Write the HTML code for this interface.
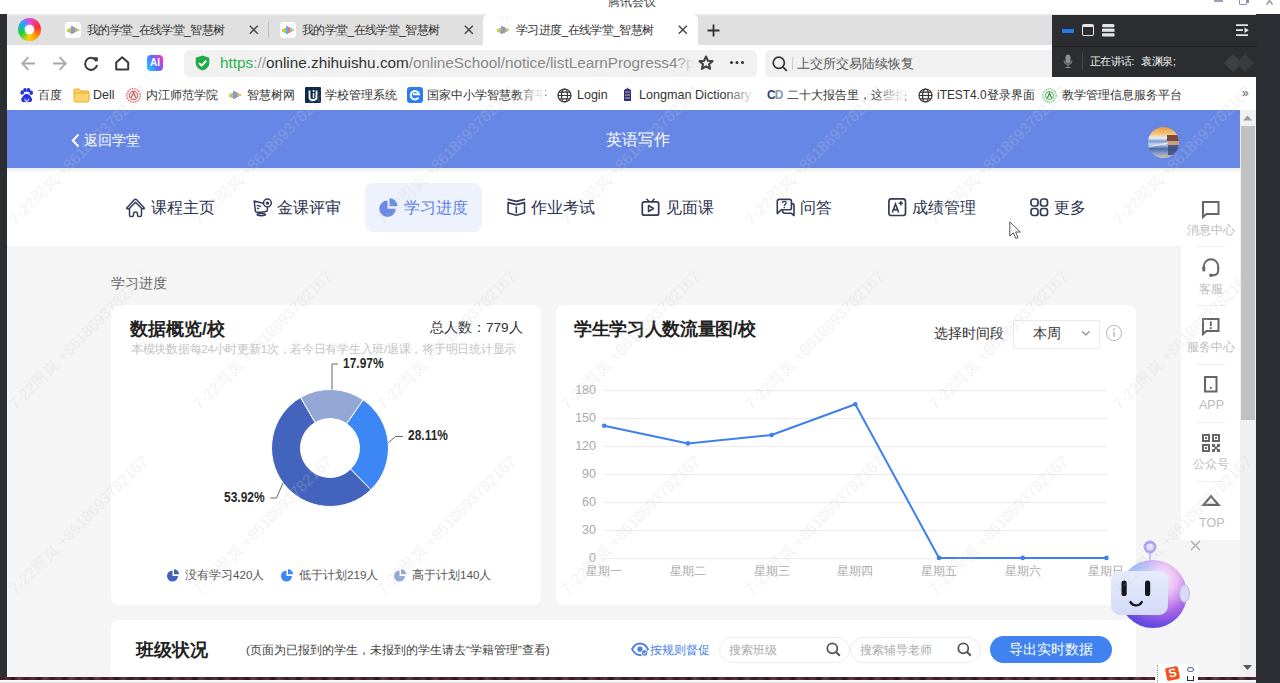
<!DOCTYPE html>
<html><head><meta charset="utf-8">
<style>
*{box-sizing:border-box;margin:0;padding:0}
html,body{width:1280px;height:683px;overflow:hidden;background:#fff;font-family:"Liberation Sans",sans-serif;color:#333}
.a{position:absolute;white-space:nowrap}
svg{position:absolute;overflow:visible}
</style></head><body>
<div class="a" style="left:0;top:0;width:1280px;height:683px;overflow:hidden">

<!-- title strip -->
<div class="a" style="left:0;top:0;width:1280px;height:14px;background:#fff"></div>
<div class="a" style="left:608px;top:-5px;font-size:12px;color:#4a4a4a;line-height:14px">腾讯会议</div>

<!-- left dark strip -->
<div class="a" style="left:0;top:14px;width:7px;height:669px;background:#2b2e32"></div>
<!-- right dark strip -->
<div class="a" style="left:1256px;top:14px;width:24px;height:669px;background:#2b2e32"></div>

<!-- tab bar -->
<div class="a" style="left:7px;top:14px;width:1249px;height:31px;background:#e0e0e0;border-top:2px solid #e8e8e8"></div>
<div class="a" style="left:483px;top:14px;width:215px;height:31px;background:#fff;border-radius:6px 6px 0 0"></div>

<!-- address row -->
<div class="a" style="left:7px;top:45px;width:1249px;height:65px;background:#fff"></div>
<div class="a" style="left:184px;top:50px;width:573px;height:27px;background:#f1f1f1;border-radius:6px"></div>
<div class="a" style="left:765px;top:50px;width:300px;height:27px;background:#f1f1f1;border-radius:6px"></div>


<!-- window controls -->
<div class="a" style="left:1214px;top:0;width:9px;height:2px;background:#9aa3b3"></div>
<div class="a" style="left:1239px;top:-4px;width:8px;height:9px;border:1.5px solid #8a94a6;border-radius:1px"></div>
<div class="a" style="left:1247px;top:-2px;width:2px;height:5px;background:#8a94a6"></div>
<svg style="left:1266px;top:-3px" width="8" height="8"><path d="M0.5 7.5L3.5 3.5L6.5 7.5M3.5 3.5L3.5 0" stroke="#8a94a6" stroke-width="1.4" fill="none"/></svg>

<!-- browser logo -->
<div class="a" style="left:18px;top:18px;width:23px;height:23px;border-radius:50%;background:conic-gradient(from 0deg,#e040e0 0deg,#ff2424 75deg,#ff9a00 140deg,#ffd000 185deg,#10d030 245deg,#14a4ff 310deg,#e040e0 360deg);opacity:0.95"></div>
<div class="a" style="left:25px;top:25px;width:9px;height:9px;border-radius:50%;background:#fff;box-shadow:0 0 2px #fff"></div>
<!-- tab favicons -->
<div class="a" style="left:65px;top:22px;width:16px;height:16px;background:#fff;border-radius:4px"></div>
<svg style="left:66px;top:25px" width="14" height="10"><g stroke-width="1.6"><path d="M2 4v3" stroke="#f5a623"/><path d="M4 3v5" stroke="#7ed321"/><path d="M6 1v8" stroke="#4a90e2"/><path d="M8 2v6" stroke="#e94b6b"/><path d="M10 3v4" stroke="#50c8a8"/><path d="M12 4v2" stroke="#f5a623"/></g></svg>
<div class="a" style="left:87px;top:23px;font-size:12px;line-height:14px;color:#333;letter-spacing:-0.6px">我的学堂_在线学堂_智慧树</div>
<svg style="left:249px;top:25px" width="10" height="10"><path d="M0.8 0.8L8.8 8.8M8.8 0.8L0.8 8.8" stroke="#444" stroke-width="1.4"/></svg>
<div class="a" style="left:268px;top:22px;width:1px;height:16px;background:#bdbdbd"></div>
<div class="a" style="left:280px;top:22px;width:16px;height:16px;background:#fff;border-radius:4px"></div>
<svg style="left:281px;top:25px" width="14" height="10"><g stroke-width="1.6"><path d="M2 4v3" stroke="#f5a623"/><path d="M4 3v5" stroke="#7ed321"/><path d="M6 1v8" stroke="#4a90e2"/><path d="M8 2v6" stroke="#e94b6b"/><path d="M10 3v4" stroke="#50c8a8"/><path d="M12 4v2" stroke="#f5a623"/></g></svg>
<div class="a" style="left:302px;top:23px;font-size:12px;line-height:14px;color:#333;letter-spacing:-0.6px">我的学堂_在线学堂_智慧树</div>
<svg style="left:464px;top:25px" width="10" height="10"><path d="M0.8 0.8L8.8 8.8M8.8 0.8L0.8 8.8" stroke="#444" stroke-width="1.4"/></svg>
<svg style="left:496px;top:25px" width="14" height="10"><g stroke-width="1.6"><path d="M2 4v3" stroke="#f5a623"/><path d="M4 3v5" stroke="#7ed321"/><path d="M6 1v8" stroke="#4a90e2"/><path d="M8 2v6" stroke="#e94b6b"/><path d="M10 3v4" stroke="#50c8a8"/><path d="M12 4v2" stroke="#f5a623"/></g></svg>
<div class="a" style="left:516px;top:23px;font-size:12px;line-height:14px;color:#333;letter-spacing:-0.6px">学习进度_在线学堂_智慧树</div>
<svg style="left:678px;top:25px" width="10" height="10"><path d="M0.8 0.8L8.8 8.8M8.8 0.8L0.8 8.8" stroke="#444" stroke-width="1.4"/></svg>
<svg style="left:707px;top:24px" width="13" height="13"><path d="M6.5 0.5v12M0.5 6.5h12" stroke="#333" stroke-width="1.8"/></svg>

<!-- nav buttons -->
<svg style="left:21px;top:56px" width="15" height="15"><path d="M14 7.5H1.5M7.5 1.2L1.2 7.5L7.5 13.8" stroke="#a8a8a8" stroke-width="1.8" fill="none"/></svg>
<svg style="left:52px;top:56px" width="15" height="15"><path d="M1 7.5H13.5M7.5 1.2L13.8 7.5L7.5 13.8" stroke="#a8a8a8" stroke-width="1.8" fill="none"/></svg>
<svg style="left:84px;top:56px" width="15" height="15"><path d="M12.5 5.2A6 6 0 1 0 13 9" stroke="#3a3a3a" stroke-width="2" fill="none"/><path d="M9.2 1.2L13.8 1.2L13.8 5.8Z" fill="#3a3a3a"/></svg>
<svg style="left:115px;top:56px" width="15" height="15"><path d="M1.2 6.5L7.2 1.2L13.2 6.5V13.5H1.2Z" stroke="#3a3a3a" stroke-width="2" fill="none" stroke-linejoin="round"/></svg>
<div class="a" style="left:147px;top:55px;width:16px;height:16px;border-radius:4px;background:linear-gradient(60deg,#1fc3ff 10%,#5a6cff 50%,#ff2fb8 95%)"></div>
<div class="a" style="left:149px;top:56px;width:12px;font-size:10px;line-height:14px;color:#fff;font-weight:bold;text-align:center">AI</div>

<!-- shield -->
<svg style="left:195px;top:55px" width="15" height="16"><path d="M7.5 0.5L14.3 2.8V8C14.3 11.8 11 14.4 7.5 15.5C4 14.4 0.7 11.8 0.7 8V2.8Z" fill="#21ab48"/><path d="M4 8L6.6 10.6L11.2 5.8" stroke="#fff" stroke-width="2" fill="none"/></svg>
<div class="a" style="left:220px;top:54px;font-size:15.3px;line-height:18px;color:#333"><span style="color:#2bb24c">https</span><span style="color:#999">://</span>online.zhihuishu.com<span style="color:#888">/onlineSchool/notice/listLearnProgress4?p</span></div>
<div class="a" style="left:676px;top:50px;width:18px;height:27px;background:linear-gradient(90deg,rgba(241,241,241,0),#f1f1f1)"></div>
<div class="a" style="left:694px;top:50px;width:63px;height:27px;background:#f1f1f1;border-radius:0 6px 6px 0"></div>
<svg style="left:698px;top:55px" width="16" height="16"><path d="M8 1.5L9.9 5.7L14.5 6.1L11 9.2L12.1 13.8L8 11.4L3.9 13.8L5 9.2L1.5 6.1L6.1 5.7Z" stroke="#444" stroke-width="2.1" fill="none" stroke-linejoin="round"/></svg>
<div class="a" style="left:730px;top:61px;width:3px;height:3px;border-radius:50%;background:#333;box-shadow:5.5px 0 #333,11px 0 #333"></div>

<!-- search -->
<svg style="left:772px;top:56px" width="16" height="16"><circle cx="6.8" cy="6.8" r="5.6" stroke="#333" stroke-width="1.7" fill="none"/><path d="M10.8 10.8L14.8 14.8" stroke="#333" stroke-width="1.8"/></svg>
<div class="a" style="left:792px;top:57px;width:1px;height:13px;background:#ccc"></div>
<div class="a" style="left:797px;top:55px;font-size:13px;line-height:17px;color:#555">上交所交易陆续恢复</div>


<!-- bookmarks -->
<svg style="left:19px;top:88px" width="15" height="15"><g fill="#2932e1"><ellipse cx="3.2" cy="4.5" rx="1.8" ry="2.3"/><ellipse cx="6" cy="2.2" rx="1.8" ry="2.1"/><ellipse cx="9.5" cy="2.2" rx="1.8" ry="2.1"/><ellipse cx="12.2" cy="4.8" rx="1.8" ry="2.3"/><path d="M7.7 5.8C5.5 5.8 2.2 9.8 2.2 11.8C2.2 13.6 3.8 14.4 5 14.2C6.2 14 7 13.6 7.7 13.6C8.4 13.6 9.2 14 10.4 14.2C11.6 14.4 13.2 13.6 13.2 11.8C13.2 9.8 9.9 5.8 7.7 5.8Z"/></g><path d="M6 10.5v2.2h3.4v-2.2" stroke="#fff" stroke-width="0.8" fill="none"/></svg>
<div class="a" style="left:38px;top:88px;font-size:12px;line-height:14px;color:#333">百度</div>
<svg style="left:73px;top:88px" width="17" height="15"><path d="M1 2.2C1 1.5 1.5 1 2.2 1H6.2L7.8 3H14.8C15.5 3 16 3.5 16 4.2V12.8C16 13.5 15.5 14 14.8 14H2.2C1.5 14 1 13.5 1 12.8Z" fill="#fcd66a" stroke="#f0a830" stroke-width="1"/><path d="M1 5H16" stroke="#f0a830" stroke-width="1"/></svg>
<div class="a" style="left:93px;top:88px;font-size:12.5px;line-height:14px;color:#333">Dell</div>
<svg style="left:126px;top:88px" width="15" height="15"><circle cx="7.5" cy="7.5" r="6.8" fill="#fbeeee" stroke="#d55a5a" stroke-width="1.2" stroke-dasharray="1.5 1"/><circle cx="7.5" cy="7.5" r="4.2" fill="none" stroke="#d04848" stroke-width="1"/><path d="M5 10L7.5 4.5L10 10" stroke="#d04848" stroke-width="1.2" fill="none"/></svg>
<div class="a" style="left:146px;top:88px;font-size:12px;line-height:14px;color:#333">内江师范学院</div>
<svg style="left:228px;top:90px" width="14" height="10"><g stroke-width="1.6"><path d="M2 4v3" stroke="#f5a623"/><path d="M4 3v5" stroke="#7ed321"/><path d="M6 1v8" stroke="#4a90e2"/><path d="M8 2v6" stroke="#e94b6b"/><path d="M10 3v4" stroke="#50c8a8"/><path d="M12 4v2" stroke="#f5a623"/></g></svg>
<div class="a" style="left:247px;top:88px;font-size:12px;line-height:14px;color:#333">智慧树网</div>
<div class="a" style="left:305px;top:87px;width:16px;height:16px;background:#0e2a4a;border-radius:1px"></div>
<svg style="left:305px;top:87px" width="16" height="16"><path d="M4.5 3.5V10.5C4.5 12 6 13 8 13C10 13 11.5 12 11.5 10.5V3.5" stroke="#fff" stroke-width="1.8" fill="none"/><circle cx="8.5" cy="4" r="1" fill="#fff"/><path d="M8.5 6V11" stroke="#fff" stroke-width="1.4"/></svg>
<div class="a" style="left:325px;top:88px;font-size:12px;line-height:14px;color:#333">学校管理系统</div>
<div class="a" style="left:407px;top:87px;width:16px;height:16px;background:#2a7cf0;border-radius:3px"></div>
<svg style="left:407px;top:87px" width="16" height="16"><path d="M11.5 10.5A4.2 4.2 0 1 1 12 7.2H6" stroke="#fff" stroke-width="2" fill="none"/></svg>
<div class="a" style="left:427px;top:88px;font-size:12px;line-height:14px;color:#333">国家中小学智慧教育平</div>
<div class="a" style="left:515px;top:86px;width:30px;height:18px;background:linear-gradient(90deg,rgba(255,255,255,0),#fff)"></div>
<svg style="left:557px;top:88px" width="15" height="15"><g stroke="#333" stroke-width="1.2" fill="none"><circle cx="7.5" cy="7.5" r="6.5"/><ellipse cx="7.5" cy="7.5" rx="3" ry="6.5"/><path d="M1 7.5H14M2 4.2H13M2 10.8H13"/></g></svg>
<div class="a" style="left:577px;top:88px;font-size:12.5px;line-height:14px;color:#333">Login</div>
<svg style="left:621px;top:87px" width="13" height="16"><path d="M3 3L6.5 1L10 3V14H3Z" fill="#2d2f8f"/><path d="M4 5H9M4 8H9M4 11H9" stroke="#f2c94c" stroke-width="0.9"/><path d="M5 1.5L6.5 0.5L8 1.5" stroke="#f2c94c" stroke-width="1" fill="none"/></svg>
<div class="a" style="left:639px;top:88px;font-size:12.6px;line-height:14px;color:#333">Longman Dictionary</div>
<div class="a" style="left:725px;top:86px;width:30px;height:18px;background:linear-gradient(90deg,rgba(255,255,255,0),#fff)"></div>
<div class="a" style="left:767px;top:87px;font-size:12px;line-height:16px;font-weight:bold;color:#2f3f73;letter-spacing:-1px">C<span style="color:#8b97b8">D</span></div>
<div class="a" style="left:787px;top:88px;font-size:12px;line-height:14px;color:#333">二十大报告里，这些提</div>
<div class="a" style="left:875px;top:86px;width:30px;height:18px;background:linear-gradient(90deg,rgba(255,255,255,0),#fff)"></div>
<svg style="left:918px;top:88px" width="15" height="15"><g stroke="#333" stroke-width="1.2" fill="none"><circle cx="7.5" cy="7.5" r="6.5"/><ellipse cx="7.5" cy="7.5" rx="3" ry="6.5"/><path d="M1 7.5H14M2 4.2H13M2 10.8H13"/></g></svg>
<div class="a" style="left:937px;top:88px;font-size:11.9px;line-height:14px;color:#333">iTEST4.0登录界面</div>
<svg style="left:1042px;top:88px" width="15" height="15"><circle cx="7.5" cy="7.5" r="6.8" fill="#e8f5ea" stroke="#7cc38a" stroke-width="1.2" stroke-dasharray="1.2 0.8"/><circle cx="7.5" cy="7.5" r="4" fill="#fff" stroke="#4caf50" stroke-width="1"/><path d="M5.5 10L7.5 5L9.5 10" stroke="#2e8b3e" stroke-width="1.2" fill="none"/></svg>
<div class="a" style="left:1062px;top:88px;font-size:12px;line-height:14px;color:#333">教学管理信息服务平台</div>
<div class="a" style="left:1242px;top:86px;font-size:12px;line-height:14px;color:#555">»</div>

<!-- blue header -->
<div class="a" style="left:7px;top:110px;width:1233px;height:58px;background:#6787e6"></div>
<svg style="left:71px;top:133px" width="9" height="15"><path d="M7.5 1.5L1.8 7.5L7.5 13.5" stroke="#fff" stroke-width="2" fill="none"/></svg>
<div class="a" style="left:84px;top:131px;font-size:14px;line-height:18px;color:#fff">返回学堂</div>
<div class="a" style="left:606px;top:130px;font-size:16px;line-height:20px;color:#fff">英语写作</div>
<svg style="left:1148px;top:127px" width="31" height="31"><defs><clipPath id="av"><circle cx="15.5" cy="15.5" r="15.5"/></clipPath><linearGradient id="avg" x1="0" y1="0" x2="0" y2="1"><stop offset="0" stop-color="#e89a45"/><stop offset="0.22" stop-color="#f5c27a"/><stop offset="0.36" stop-color="#e8eef6"/><stop offset="0.46" stop-color="#7d9cd0"/><stop offset="0.56" stop-color="#c9d6ea"/><stop offset="0.7" stop-color="#4a6aa8"/><stop offset="0.85" stop-color="#8aa0c8"/><stop offset="1" stop-color="#d8c0a8"/></linearGradient></defs><g clip-path="url(#av)"><rect width="31" height="31" fill="url(#avg)"/><rect x="19" y="8" width="12" height="6" fill="#7a4a3a"/><rect x="19" y="14" width="12" height="4" fill="#c8a080"/><rect x="20" y="18" width="11" height="10" fill="#3a4a7a" opacity="0.8"/><path d="M0 20L20 16" stroke="#e8eef8" stroke-width="1.2"/></g></svg>

<!-- scrollbar -->
<div class="a" style="left:1240px;top:110px;width:16px;height:573px;background:#f0f0f0"></div>
<div class="a" style="left:1241px;top:126px;width:14px;height:294px;background:#c1c1c1"></div>

<!-- nav row -->
<div class="a" style="left:7px;top:168px;width:1233px;height:78px;background:#fff"></div>
<div class="a" style="left:7px;top:168px;width:1233px;height:5px;background:linear-gradient(rgba(0,0,0,0.07),rgba(0,0,0,0))"></div>
<div class="a" style="left:365px;top:183px;width:117px;height:49px;background:#edf2fd;border-radius:8px"></div>
<svg style="left:125px;top:198px" width="21" height="20"><g stroke="#343b58" stroke-width="1.5" fill="none" stroke-linejoin="round"><path d="M4.5 10.8H2.6Q1.3 10.8 2 9.7L9.6 1.6Q10.5 0.7 11.4 1.6L19 9.7Q19.7 10.8 18.4 10.8H16.5V17.2Q16.5 18.6 15.1 18.6H13.8Q12.5 18.6 12.5 17.3V16Q12.5 14 10.5 14Q8.5 14 8.5 16V17.3Q8.5 18.6 7.2 18.6H5.9Q4.5 18.6 4.5 17.2Z"/><path d="M4.3 10.5L10.5 4.2L16.7 10.5"/></g></svg>
<div class="a" style="left:151px;top:197px;font-size:16px;line-height:21px;color:#2c3350">课程主页</div>
<svg style="left:253px;top:198px" width="20" height="19"><g stroke="#343b58" stroke-width="1.5" fill="none" stroke-linecap="round" stroke-linejoin="round"><path d="M10 5.2L1.2 3L2.4 13.2C2.5 14 3 14.3 3.8 14.3C8 14.3 11.5 14 13.6 13.2C14.2 13 14.4 12.6 14.4 12V9.4"/><circle cx="14.4" cy="5" r="3.9"/><path d="M4.2 7.4L7.6 8.4M4.5 10.3L5.6 10.6"/><ellipse cx="8.3" cy="16.6" rx="4.2" ry="1.1"/></g><path d="M14.4 3.3L16 4.6V6.6H12.8V4.6Z" fill="#343b58"/></svg>
<div class="a" style="left:277px;top:197px;font-size:16px;line-height:21px;color:#2c3350">金课评审</div>
<svg style="left:379px;top:197px" width="21" height="21"><path d="M8.5 3.5A8.2 8.2 0 1 0 16.7 11.7H8.5Z" fill="#6a8ae6"/><path d="M10.5 1.2A8 8 0 0 1 18.5 9.2H10.5Z" fill="#6a8ae6"/></svg>
<div class="a" style="left:404px;top:197px;font-size:16px;line-height:21px;color:#5d82e8">学习进度</div>
<svg style="left:506px;top:198px" width="21" height="19"><g stroke="#343b58" stroke-width="1.6" fill="none" stroke-linejoin="round" stroke-linecap="round"><path d="M2.1 1.4L10.3 3.4L18.5 1.4"/><path d="M2.1 4.6L10.3 6.6L18.5 4.6V15L10.3 17.2L2.1 15Z"/><path d="M10.3 9.2V14.8"/></g></svg>
<div class="a" style="left:531px;top:197px;font-size:16px;line-height:21px;color:#2c3350">作业考试</div>
<svg style="left:641px;top:198px" width="20" height="19"><rect x="1.3" y="3.8" width="16.4" height="13.4" rx="2" stroke="#343b58" stroke-width="1.7" fill="none"/><path d="M5.5 0.8L8 3.5M13.5 0.8L11 3.5" stroke="#343b58" stroke-width="1.5"/><path d="M7.5 7.5V13.5L12.5 10.5Z" stroke="#343b58" stroke-width="1.5" fill="none" stroke-linejoin="round"/></svg>
<div class="a" style="left:666px;top:197px;font-size:16px;line-height:21px;color:#2c3350">见面课</div>
<svg style="left:776px;top:198px" width="20" height="20"><g stroke="#343b58" stroke-width="1.6" fill="none" stroke-linejoin="round"><path d="M1.3 15.6V3.2Q1.3 1.4 3.1 1.4H13.6Q15.4 1.4 15.4 3.2V10Q15.4 11.8 13.6 11.8H5.2Z"/><path d="M15.6 5.6H16.2Q18 5.6 18 7.4V17.6L15.4 15.3H8.6Q6.6 15.3 6.3 12.2"/><path d="M6.4 5.2C6.4 4 7.2 3.4 8.3 3.4C9.4 3.4 10.2 4.1 10.2 5C10.2 6.2 8.3 6.4 8.3 8" stroke-width="1.3"/></g><circle cx="8.3" cy="9.6" r="0.8" fill="#343b58"/></svg>
<div class="a" style="left:800px;top:197px;font-size:16px;line-height:21px;color:#2c3350">问答</div>
<svg style="left:888px;top:198px" width="19" height="19"><rect x="0.9" y="0.9" width="16.6" height="16.6" rx="2.5" stroke="#343b58" stroke-width="1.7" fill="none"/><path d="M4.3 14.5L7.5 6L10.7 14.5M5.4 11.6H9.6" stroke="#343b58" stroke-width="1.6" fill="none"/><path d="M12.8 3V7.4M10.6 5.2H15" stroke="#343b58" stroke-width="1.5"/></svg>
<div class="a" style="left:912px;top:197px;font-size:16px;line-height:21px;color:#2c3350">成绩管理</div>
<svg style="left:1030px;top:198px" width="19" height="19"><g stroke="#343b58" stroke-width="1.7" fill="none"><rect x="1" y="1" width="7" height="7" rx="2.5"/><rect x="10.5" y="1" width="7" height="7" rx="2.5"/><rect x="1" y="10.5" width="7" height="7" rx="2.5"/><rect x="10.5" y="10.5" width="7" height="7" rx="2.5"/></g></svg>
<div class="a" style="left:1054px;top:197px;font-size:16px;line-height:21px;color:#2c3350">更多</div>
<svg style="left:1009px;top:221px" width="13" height="19"><path d="M0.8 0.8V15L4.3 11.8L6.8 17.5L9 16.5L6.6 11H11.3Z" fill="#fff" stroke="#555" stroke-width="1" stroke-linejoin="round"/></svg>

<!-- content bg -->
<div class="a" style="left:7px;top:246px;width:1233px;height:431px;background:#f5f5f5"></div>

<!-- cards -->
<div class="a" style="left:111px;top:276px;font-size:13.5px;line-height:16px;color:#666">学习进度</div>
<div class="a" style="left:111px;top:305px;width:430px;height:300px;background:#fff;border-radius:8px"></div>
<div class="a" style="left:556px;top:305px;width:580px;height:300px;background:#fff;border-radius:8px"></div>
<div class="a" style="left:111px;top:620px;width:1025px;height:80px;background:#fff;border-radius:8px"></div>

<!-- card1 -->
<div class="a" style="left:130px;top:318px;font-size:17.6px;line-height:22px;font-weight:bold;color:#222">数据概览/校</div>
<div class="a" style="left:430px;top:319px;font-size:13.6px;line-height:17px;color:#333">总人数：779人</div>
<div class="a" style="left:131px;top:342px;font-size:11.7px;letter-spacing:-0.28px;line-height:14px;color:#c4c4c4">本模块数据每24小时更新1次，若今日有学生入班/退课，将于明日统计显示</div>
<svg style="left:0;top:0" width="600" height="683">
  <g stroke="#fff" stroke-width="1">
    <path d="M363.13 399.79 A58.5 58.5 0 0 1 370.86 489.87 L350.6 469.11 A29.5 29.5 0 0 0 346.71 423.69 Z" fill="#3d86f5"/>
    <path d="M370.86 489.87 A58.5 58.5 0 1 1 300.57 397.44 L315.16 422.5 A29.5 29.5 0 1 0 350.6 469.11 Z" fill="#4264bd"/>
    <path d="M300.57 397.44 A58.5 58.5 0 0 1 363.13 399.79 L346.71 423.69 A29.5 29.5 0 0 0 315.16 422.5 Z" fill="#93a6d6"/>
  </g>
  <g stroke="#666" stroke-width="1" fill="none">
    <path d="M332 389.5V364H338"/>
    <path d="M388.5 442.5L395.5 436.5H403"/>
    <path d="M283 483L276.5 498H270.5"/>
  </g>
</svg>
<div class="a" style="left:343px;top:354.5px;font-size:14.6px;line-height:16px;font-weight:bold;color:#2a2a2a;transform:scaleX(0.82);transform-origin:0 0">17.97%</div>
<div class="a" style="left:408px;top:426.5px;font-size:14.6px;line-height:16px;font-weight:bold;color:#2a2a2a;transform:scaleX(0.82);transform-origin:0 0">28.11%</div>
<div class="a" style="left:224px;top:488.5px;font-size:14.6px;line-height:16px;font-weight:bold;color:#2a2a2a;transform:scaleX(0.82);transform-origin:0 0">53.92%</div>
<svg style="left:167px;top:569px" width="13" height="13"><path d="M5.5 1.5A5.5 5.5 0 1 0 11 7H5.5Z" fill="#4264bd"/><path d="M7 0.2A5 5 0 0 1 12 5.2H7Z" fill="#4264bd"/></svg>
<div class="a" style="left:185px;top:567px;font-size:11.65px;line-height:16px;color:#555">没有学习420人</div>
<svg style="left:281px;top:569px" width="13" height="13"><path d="M5.5 1.5A5.5 5.5 0 1 0 11 7H5.5Z" fill="#3d86f5"/><path d="M7 0.2A5 5 0 0 1 12 5.2H7Z" fill="#3d86f5"/></svg>
<div class="a" style="left:299px;top:567px;font-size:11.65px;line-height:16px;color:#555">低于计划219人</div>
<svg style="left:394px;top:569px" width="13" height="13"><path d="M5.5 1.5A5.5 5.5 0 1 0 11 7H5.5Z" fill="#93a6d6"/><path d="M7 0.2A5 5 0 0 1 12 5.2H7Z" fill="#93a6d6"/></svg>
<div class="a" style="left:412px;top:567px;font-size:11.65px;line-height:16px;color:#555">高于计划140人</div>

<!-- card2 -->
<div class="a" style="left:574px;top:318px;font-size:17.6px;letter-spacing:-0.32px;line-height:22px;font-weight:bold;color:#222">学生学习人数流量图/校</div>
<div class="a" style="left:934px;top:325px;font-size:13.5px;line-height:17px;color:#333">选择时间段</div>
<div class="a" style="left:1013px;top:320px;width:87px;height:29px;border:1px solid #ebebeb;border-radius:2px"></div>
<div class="a" style="left:1033px;top:325px;font-size:14px;line-height:17px;color:#333">本周</div>
<svg style="left:1081px;top:330px" width="10" height="7"><path d="M1 1.2L4.8 5L8.6 1.2" stroke="#999" stroke-width="1.5" fill="none"/></svg>
<svg style="left:1105px;top:324px" width="18" height="18"><circle cx="9" cy="9" r="7.6" stroke="#c8c8c8" stroke-width="1.3" fill="none"/><circle cx="9" cy="5.2" r="1" fill="#c0c0c0"/><path d="M9 7.5V13" stroke="#c0c0c0" stroke-width="1.6"/></svg>
<svg style="left:0;top:0" width="1280" height="683">
<g stroke="#ececec" stroke-width="1">
<path d="M604 558.5H1107"/>
<path d="M604 530.5H1107"/>
<path d="M604 502.5H1107"/>
<path d="M604 474.5H1107"/>
<path d="M604 446.5H1107"/>
<path d="M604 418.5H1107"/>
<path d="M604 390.5H1107"/>
</g>
<polyline points="604.2,425.7 687.9,443.4 771.6,435.0 855.3,404.3 939.0,557.9 1022.7,557.9 1106.4,557.9" stroke="#3f80f0" stroke-width="2" fill="none" stroke-linejoin="round"/>
<circle cx="604.2" cy="425.7" r="2.3" fill="#3f80f0"/>
<circle cx="687.9" cy="443.4" r="2.3" fill="#3f80f0"/>
<circle cx="771.6" cy="435.0" r="2.3" fill="#3f80f0"/>
<circle cx="855.3" cy="404.3" r="2.3" fill="#3f80f0"/>
<circle cx="939.0" cy="557.9" r="2.3" fill="#3f80f0"/>
<circle cx="1022.7" cy="557.9" r="2.3" fill="#3f80f0"/>
<circle cx="1106.4" cy="557.9" r="2.3" fill="#3f80f0"/>
</svg>
<div class="a" style="left:556px;top:382.3px;width:40px;text-align:right;font-size:12.5px;line-height:16px;color:#aaa">180</div>
<div class="a" style="left:556px;top:410.2px;width:40px;text-align:right;font-size:12.5px;line-height:16px;color:#aaa">150</div>
<div class="a" style="left:556px;top:438.2px;width:40px;text-align:right;font-size:12.5px;line-height:16px;color:#aaa">120</div>
<div class="a" style="left:556px;top:466.1px;width:40px;text-align:right;font-size:12.5px;line-height:16px;color:#aaa">90</div>
<div class="a" style="left:556px;top:494.0px;width:40px;text-align:right;font-size:12.5px;line-height:16px;color:#aaa">60</div>
<div class="a" style="left:556px;top:522.0px;width:40px;text-align:right;font-size:12.5px;line-height:16px;color:#aaa">30</div>
<div class="a" style="left:556px;top:549.9px;width:40px;text-align:right;font-size:12.5px;line-height:16px;color:#aaa">0</div>
<div class="a" style="left:586.2px;top:563px;width:36px;text-align:center;font-size:12px;line-height:16px;color:#aaa">星期一</div>
<div class="a" style="left:669.9px;top:563px;width:36px;text-align:center;font-size:12px;line-height:16px;color:#aaa">星期二</div>
<div class="a" style="left:753.6px;top:563px;width:36px;text-align:center;font-size:12px;line-height:16px;color:#aaa">星期三</div>
<div class="a" style="left:837.3px;top:563px;width:36px;text-align:center;font-size:12px;line-height:16px;color:#aaa">星期四</div>
<div class="a" style="left:921.0px;top:563px;width:36px;text-align:center;font-size:12px;line-height:16px;color:#aaa">星期五</div>
<div class="a" style="left:1004.7px;top:563px;width:36px;text-align:center;font-size:12px;line-height:16px;color:#aaa">星期六</div>
<div class="a" style="left:1088.4px;top:563px;width:36px;text-align:center;font-size:12px;line-height:16px;color:#aaa">星期日</div>


<!-- card3 -->
<div class="a" style="left:136px;top:639px;font-size:17.6px;line-height:22px;font-weight:bold;color:#222">班级状况</div>
<div class="a" style="left:246px;top:642px;font-size:11.7px;line-height:16px;color:#444">(页面为已报到的学生，未报到的学生请去“学籍管理”查看)</div>
<svg style="left:631px;top:642px" width="18" height="15"><path d="M1 7.2C3 3.5 5.8 1.5 9 1.5C12.2 1.5 15 3.5 17 7.2C15 11 12.2 13 9 13C5.8 13 3 11 1 7.2Z" stroke="#4a7fe6" stroke-width="1.8" fill="none"/><circle cx="9" cy="7.2" r="2.6" fill="#4a7fe6"/><circle cx="13.5" cy="11" r="3.3" fill="#4a7fe6" stroke="#fff" stroke-width="1"/><path d="M12 11L13.2 12.2L15 10" stroke="#fff" stroke-width="1" fill="none"/></svg>
<div class="a" style="left:650px;top:642px;font-size:12px;line-height:16px;color:#4a7fe6">按规则督促</div>
<div class="a" style="left:719px;top:637px;width:131px;height:26px;border:1px solid #ececec;border-radius:13px;background:#fff"></div>
<div class="a" style="left:729px;top:642px;font-size:12px;line-height:16px;color:#aaa">搜索班级</div>
<svg style="left:826px;top:642px" width="15" height="15"><circle cx="6.3" cy="6.3" r="5" stroke="#555" stroke-width="1.8" fill="none"/><path d="M10 10L13.8 13.8" stroke="#555" stroke-width="2"/></svg>
<div class="a" style="left:850px;top:637px;width:131px;height:26px;border:1px solid #ececec;border-radius:13px;background:#fff"></div>
<div class="a" style="left:860px;top:642px;font-size:12px;line-height:16px;color:#aaa">搜索辅导老师</div>
<svg style="left:957px;top:642px" width="15" height="15"><circle cx="6.3" cy="6.3" r="5" stroke="#555" stroke-width="1.8" fill="none"/><path d="M10 10L13.8 13.8" stroke="#555" stroke-width="2"/></svg>
<div class="a" style="left:990px;top:636px;width:122px;height:27px;border-radius:14px;background:#3f82f0"></div>
<div class="a" style="left:990px;top:640px;width:122px;text-align:center;font-size:13.6px;line-height:19px;color:#fff">导出实时数据</div>
<!-- sidebar -->
<div class="a" style="left:1181px;top:173px;width:59px;height:367px;background:#fff"></div>
<svg style="left:1202px;top:201px" width="18" height="18"><path d="M1 1H16.5V13H4.5L1 16Z" stroke="#666" stroke-width="2" fill="none" stroke-linejoin="miter"/></svg>
<div class="a" style="left:1187px;top:223px;font-size:11.8px;line-height:15px;color:#bbb">消息中心</div>
<div class="a" style="left:1196px;top:246px;width:29px;height:1px;background:#eee"></div>
<svg style="left:1201px;top:257px" width="20" height="21"><path d="M2.8 12V9.5A7.2 7.2 0 0 1 17.2 9.5V12" stroke="#666" stroke-width="2" fill="none"/><path d="M2.8 10.5V13" stroke="#666" stroke-width="3" stroke-linecap="round"/><path d="M17.2 10.5V13.5C17.2 16 15.5 17.8 13 18.2H10.5" stroke="#666" stroke-width="2" fill="none"/><circle cx="10" cy="18.3" r="1.8" fill="#666"/></svg>
<div class="a" style="left:1199px;top:282px;font-size:11.8px;line-height:15px;color:#bbb">客服</div>
<div class="a" style="left:1196px;top:305px;width:29px;height:1px;background:#eee"></div>
<svg style="left:1202px;top:318px" width="18" height="18"><path d="M1 1H16.5V13H4.5L1 16Z" stroke="#666" stroke-width="2" fill="none"/><path d="M8.8 3.5V8" stroke="#666" stroke-width="2"/><circle cx="8.8" cy="10.2" r="1.1" fill="#666"/></svg>
<div class="a" style="left:1187px;top:340px;font-size:11.8px;line-height:15px;color:#bbb">服务中心</div>
<div class="a" style="left:1196px;top:364px;width:29px;height:1px;background:#eee"></div>
<svg style="left:1204px;top:376px" width="14" height="17"><rect x="1" y="1" width="11.5" height="14.5" stroke="#666" stroke-width="2" fill="none"/><circle cx="6.8" cy="11.8" r="1.1" fill="#666"/></svg>
<div class="a" style="left:1199px;top:398px;font-size:12.5px;line-height:15px;color:#bbb">APP</div>
<div class="a" style="left:1196px;top:422px;width:29px;height:1px;background:#eee"></div>
<svg style="left:1202px;top:434px" width="18" height="18"><g fill="#666"><path d="M0 0H8V8H0ZM2 2V6H6V2Z" fill-rule="evenodd"/><path d="M10 0H18V8H10ZM12 2V6H16V2Z" fill-rule="evenodd"/><path d="M0 10H8V18H0ZM2 12V16H6V12Z" fill-rule="evenodd"/><rect x="3" y="3" width="2" height="2"/><rect x="13" y="3" width="2" height="2"/><rect x="3" y="13" width="2" height="2"/><rect x="10" y="10" width="3" height="3"/><rect x="15" y="10" width="3" height="3"/><rect x="12.5" y="12.5" width="3" height="3"/><rect x="10" y="15" width="3" height="3"/><rect x="15" y="15" width="3" height="3"/></g></svg>
<div class="a" style="left:1193px;top:457px;font-size:11.8px;line-height:15px;color:#bbb">公众号</div>
<div class="a" style="left:1196px;top:481px;width:29px;height:1px;background:#eee"></div>
<svg style="left:1201px;top:494px" width="20" height="13"><path d="M10 2.2L17.5 10.8H2.5Z" stroke="#666" stroke-width="2.2" fill="none" stroke-linejoin="miter"/></svg>
<div class="a" style="left:1199px;top:516px;font-size:12.5px;line-height:15px;color:#bbb">TOP</div>
<svg style="left:1190px;top:540px" width="11" height="11"><path d="M1 1L10 10M10 1L1 10" stroke="#aaa" stroke-width="1.3"/></svg>

<!-- robot -->
<svg style="left:1100px;top:535px" width="95" height="100">
<defs>
<radialGradient id="rb" cx="0.62" cy="0.28" r="0.8"><stop offset="0" stop-color="#fbeefc"/><stop offset="0.3" stop-color="#e8bdf3"/><stop offset="0.62" stop-color="#a866e6"/><stop offset="0.85" stop-color="#6a4be0"/><stop offset="1" stop-color="#4f46d8"/></radialGradient>
<radialGradient id="rc" cx="0.2" cy="0.25" r="0.45"><stop offset="0" stop-color="#8fe3ff" stop-opacity="0.9"/><stop offset="1" stop-color="#8fe3ff" stop-opacity="0"/></radialGradient>
<linearGradient id="rf" x1="0" y1="0" x2="0" y2="1"><stop offset="0" stop-color="#e6ecfd"/><stop offset="1" stop-color="#d3daf6"/></linearGradient>
</defs>
<path d="M50 16V26" stroke="#b8b4f0" stroke-width="1.5"/>
<circle cx="50" cy="12" r="5" fill="#e4e2fb" stroke="#a9a3f0" stroke-width="2.8"/>
<circle cx="53" cy="59" r="34" fill="url(#rb)"/>
<circle cx="53" cy="59" r="34" fill="url(#rc)"/>
<ellipse cx="84.5" cy="58.5" rx="4.8" ry="8.8" fill="#dcdaf8" stroke="#b7b2ef" stroke-width="1"/>
<rect x="11" y="36" width="57" height="44" rx="9" fill="url(#rf)"/>
<rect x="21.5" y="45.5" width="5.2" height="15.5" rx="2.6" fill="#16161e"/>
<rect x="45" y="45.5" width="5.2" height="15.5" rx="2.6" fill="#16161e"/>
<path d="M30.5 67C32.5 71.5 39.5 71.5 41.8 67" stroke="#16161e" stroke-width="2.4" fill="none" stroke-linecap="round"/>
</svg>

<!-- watermarks -->
<div class="a" style="left:12px;top:214px;font-size:15.5px;line-height:16px;color:rgba(205,205,205,0.26);transform:rotate(-45deg);transform-origin:0 50%">7-22周岚 +8618693782167</div>
<div class="a" style="left:196px;top:214px;font-size:15.5px;line-height:16px;color:rgba(205,205,205,0.26);transform:rotate(-45deg);transform-origin:0 50%">7-22周岚 +8618693782167</div>
<div class="a" style="left:380px;top:214px;font-size:15.5px;line-height:16px;color:rgba(205,205,205,0.26);transform:rotate(-45deg);transform-origin:0 50%">7-22周岚 +8618693782167</div>
<div class="a" style="left:564px;top:214px;font-size:15.5px;line-height:16px;color:rgba(205,205,205,0.26);transform:rotate(-45deg);transform-origin:0 50%">7-22周岚 +8618693782167</div>
<div class="a" style="left:748px;top:214px;font-size:15.5px;line-height:16px;color:rgba(205,205,205,0.26);transform:rotate(-45deg);transform-origin:0 50%">7-22周岚 +8618693782167</div>
<div class="a" style="left:932px;top:214px;font-size:15.5px;line-height:16px;color:rgba(205,205,205,0.26);transform:rotate(-45deg);transform-origin:0 50%">7-22周岚 +8618693782167</div>
<div class="a" style="left:1116px;top:214px;font-size:15.5px;line-height:16px;color:rgba(205,205,205,0.26);transform:rotate(-45deg);transform-origin:0 50%">7-22周岚 +8618693782167</div>
<div class="a" style="left:12px;top:399px;font-size:15.5px;line-height:16px;color:rgba(205,205,205,0.26);transform:rotate(-45deg);transform-origin:0 50%">7-22周岚 +8618693782167</div>
<div class="a" style="left:196px;top:399px;font-size:15.5px;line-height:16px;color:rgba(205,205,205,0.26);transform:rotate(-45deg);transform-origin:0 50%">7-22周岚 +8618693782167</div>
<div class="a" style="left:380px;top:399px;font-size:15.5px;line-height:16px;color:rgba(205,205,205,0.26);transform:rotate(-45deg);transform-origin:0 50%">7-22周岚 +8618693782167</div>
<div class="a" style="left:564px;top:399px;font-size:15.5px;line-height:16px;color:rgba(205,205,205,0.26);transform:rotate(-45deg);transform-origin:0 50%">7-22周岚 +8618693782167</div>
<div class="a" style="left:748px;top:399px;font-size:15.5px;line-height:16px;color:rgba(205,205,205,0.26);transform:rotate(-45deg);transform-origin:0 50%">7-22周岚 +8618693782167</div>
<div class="a" style="left:932px;top:399px;font-size:15.5px;line-height:16px;color:rgba(205,205,205,0.26);transform:rotate(-45deg);transform-origin:0 50%">7-22周岚 +8618693782167</div>
<div class="a" style="left:1116px;top:399px;font-size:15.5px;line-height:16px;color:rgba(205,205,205,0.26);transform:rotate(-45deg);transform-origin:0 50%">7-22周岚 +8618693782167</div>
<div class="a" style="left:12px;top:584px;font-size:15.5px;line-height:16px;color:rgba(205,205,205,0.26);transform:rotate(-45deg);transform-origin:0 50%">7-22周岚 +8618693782167</div>
<div class="a" style="left:196px;top:584px;font-size:15.5px;line-height:16px;color:rgba(205,205,205,0.26);transform:rotate(-45deg);transform-origin:0 50%">7-22周岚 +8618693782167</div>
<div class="a" style="left:380px;top:584px;font-size:15.5px;line-height:16px;color:rgba(205,205,205,0.26);transform:rotate(-45deg);transform-origin:0 50%">7-22周岚 +8618693782167</div>
<div class="a" style="left:564px;top:584px;font-size:15.5px;line-height:16px;color:rgba(205,205,205,0.26);transform:rotate(-45deg);transform-origin:0 50%">7-22周岚 +8618693782167</div>
<div class="a" style="left:748px;top:584px;font-size:15.5px;line-height:16px;color:rgba(205,205,205,0.26);transform:rotate(-45deg);transform-origin:0 50%">7-22周岚 +8618693782167</div>
<div class="a" style="left:932px;top:584px;font-size:15.5px;line-height:16px;color:rgba(205,205,205,0.26);transform:rotate(-45deg);transform-origin:0 50%">7-22周岚 +8618693782167</div>
<div class="a" style="left:1116px;top:584px;font-size:15.5px;line-height:16px;color:rgba(205,205,205,0.26);transform:rotate(-45deg);transform-origin:0 50%">7-22周岚 +8618693782167</div>

<!-- overlay -->
<div class="a" style="left:1052px;top:15px;width:205px;height:62px;background:#2b2d31"></div>
<div class="a" style="left:1052px;top:46px;width:205px;height:1px;background:#1f2124"></div>
<div class="a" style="left:1062px;top:29px;width:12px;height:4px;background:#1e7ce8"></div>
<div class="a" style="left:1082px;top:24px;width:12px;height:12px;border:1.6px solid #e6e6e6;border-top-width:3px;border-radius:2px"></div>
<svg style="left:1102px;top:24px" width="13" height="13"><rect x="0" y="0" width="12.5" height="3.2" rx="1.5" fill="#e6e6e6"/><rect x="0" y="4.6" width="12.5" height="3.2" fill="#e6e6e6"/><rect x="0" y="9.2" width="12.5" height="3.2" rx="1" fill="#e6e6e6"/></svg>
<svg style="left:1236px;top:24px" width="13" height="13"><path d="M0 1.2H12M0 6.2H7M0 11.2H12" stroke="#e6e6e6" stroke-width="1.8"/><path d="M8.5 3.5L12.8 6.2L8.5 8.9Z" fill="#e6e6e6"/></svg>
<svg style="left:1063px;top:54px" width="10" height="14"><rect x="2.5" y="0.5" width="5" height="9" rx="2.5" fill="#8a8d92"/><path d="M1 6.5A4 4 0 0 0 9 6.5M5 10.5V13.5M2.5 13.5H7.5" stroke="#8a8d92" stroke-width="1" fill="none"/></svg>
<div class="a" style="left:1082px;top:53px;width:1px;height:17px;background:#45484d"></div>
<div class="a" style="left:1089.5px;top:55px;font-size:10.5px;letter-spacing:-0.5px;line-height:13px;color:#f0f0f0">正在讲话:</div>
<div class="a" style="left:1141px;top:55px;font-size:10.5px;letter-spacing:-0.3px;line-height:13px;color:#f0f0f0">袁渊泉;</div>
<svg style="left:1224px;top:51px" width="34" height="22"><g fill="#3d4045"><path d="M0 12L9 3L18 12L9 21Z"/><path d="M12 12L21 3L30 12L21 21Z" fill="#383b40"/></g></svg>

<!-- bottom -->
<div class="a" style="left:0;top:677px;width:1256px;height:3px;background:repeating-linear-gradient(90deg,#3a1a22 0px,#5a2e3a 7px,#2a1418 13px,#6a3a48 19px,#3a1a22 26px)"></div>
<div class="a" style="left:0;top:680px;width:1256px;height:2px;background:#fafafa"></div>
<div class="a" style="left:0;top:682px;width:1256px;height:1px;background:#dadada"></div>

<!-- sogou -->
<div class="a" style="left:1155px;top:664px;width:43px;height:19px;background:#fff"></div>
<div class="a" style="left:1157px;top:665px;width:1px;height:18px;border-left:1px dotted #999"></div>
<div class="a" style="left:1166px;top:667px;width:13px;height:13px;background:#f4511e;border-radius:2px;transform:rotate(-12deg)"></div>
<div class="a" style="left:1166px;top:664px;width:13px;text-align:center;font-size:12px;line-height:18px;font-weight:bold;color:#fff;transform:rotate(-12deg)">S</div>
<div class="a" style="left:1187px;top:667px;width:7px;height:5px;border:1.5px solid #5a6e8a;border-radius:50%"></div>
<div class="a" style="left:1187px;top:676px;width:7px;height:5px;border:1.5px solid #1a3050;border-top:none"></div>
<svg style="left:1243px;top:665px" width="10" height="6"><path d="M0 0H9L4.5 5Z" fill="#555"/></svg>
<svg style="left:1243px;top:115px" width="10" height="6"><path d="M0 5.5H9L4.5 0.5Z" fill="#999"/></svg>


</div>
</body></html>
